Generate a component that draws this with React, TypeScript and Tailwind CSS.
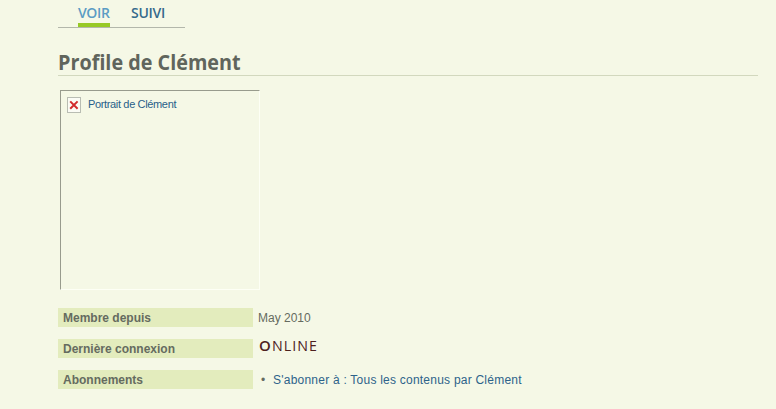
import type { ReactNode } from "react";

const arial = "font-['Liberation_Sans',Arial,sans-serif]";
const heading = "font-['Open_Sans',sans-serif]";

function Tabs() {
  return (
    <nav className={`${heading} flex h-7 w-[127px] gap-[21px] border-b border-[#b3b7ab] pl-5 text-[14px] leading-[26px] font-semibold`}>
      <a className="h-[27px] w-8 border-b-4 border-[#97c926] whitespace-nowrap text-[#5b9cc4]">
        <span className="block tracking-[-0.35px]">VOIR</span>
      </a>
      <a className="whitespace-nowrap tracking-[-0.25px] text-[#356b8c]">SUIVI</a>
    </nav>
  );
}

function BrokenImage() {
  return (
    <div className="mt-[14px] ml-[2px] flex h-[200px] w-[200px] items-start border border-t-[#989b8d] border-r-[#fdfff5] border-b-[#fdfff5] border-l-[#989b8d] pt-[6px] pl-[6px]">
      <svg width="14" height="16" viewBox="0 0 14 16" className="shrink-0">
        <rect x=".5" y=".5" width="13" height="15" fill="#fbfcf5" stroke="#b9bdb3" />
        <path d="M3.2 4.4 10.6 11.8M10.6 4.4 3.2 11.8" stroke="#d22b2b" strokeWidth="2" />
      </svg>
      <span className="ml-[7px] text-[11px] leading-[14px] whitespace-nowrap tracking-[-0.35px] text-[#285f89]">Portrait de Clément</span>
    </div>
  );
}

function Row({ label, children }: { label: string; children: ReactNode }) {
  return (
    <div className="flex h-[19px]">
      <dt className="w-[195px] bg-[#e3ecbd] pl-[5px] text-[12px] leading-[20px] font-bold">{label}</dt>
      <dd className="pl-[5px] text-[12px] leading-[20px] whitespace-nowrap">{children}</dd>
    </div>
  );
}

export default function App() {
  return (
    <main className={`${arial} h-[409px] w-[776px] overflow-hidden bg-[#f5f8e6] pl-[58px] text-[#656b60]`}>
      <Tabs />
      <h1 className={`${heading} mt-[20px] h-[28px] w-[700px] border-b border-[#d2d8be] text-[21px] leading-[29px] font-bold whitespace-nowrap text-[#60655c]`}>
        <span className="inline-block origin-left scale-x-[0.942]">Profile de Clément</span>
      </h1>
      <BrokenImage />
      <dl className="mt-[18px] flex flex-col gap-3">
        <Row label="Membre depuis">May 2010</Row>
        <Row label="Dernière connexion">
          <span className="flex h-[12px] items-baseline pl-px font-['Open_Sans',sans-serif] text-[15px] leading-[12px] text-[#4d211d]">
            <span className="w-[13px] text-[15px] font-semibold">O</span>
            <span className="origin-left scale-x-[0.95] tracking-[1.1px]">NLINE</span>
          </span>
        </Row>
        <Row label="Abonnements">
          <span className="flex pl-[3px]">
            <span className="w-3">•</span>
            <a className="tracking-[0.23px] text-[#2d638a]">S'abonner à : Tous les contenus par Clément</a>
          </span>
        </Row>
      </dl>
    </main>
  );
}
